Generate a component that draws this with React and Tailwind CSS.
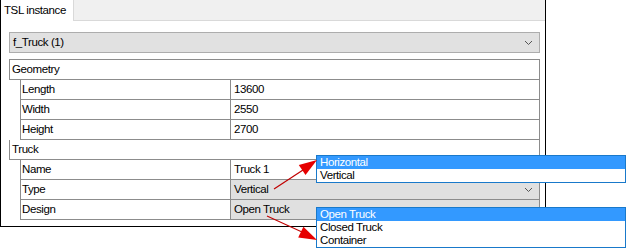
import React from "react";

const groups = [
  {
    name: "Geometry",
    items: [
      { label: "Length", value: "13600" },
      { label: "Width", value: "2550" },
      { label: "Height", value: "2700" },
    ],
  },
  {
    name: "Truck",
    items: [
      { label: "Name", value: "Truck 1" },
      { label: "Type", value: "Vertical", combo: true },
      { label: "Design", value: "Open Truck", combo: true },
    ],
  },
];

const Chevron = () => (
  <svg width="9" height="6" viewBox="0 0 9 6" className="shrink-0">
    <path d="M1 1 L4.5 4.5 L8 1" fill="none" stroke="#555" strokeWidth="1" />
  </svg>
);

const Popup = ({ items, className }) => (
  <div className={`absolute w-[310px] border border-[#1979ca] bg-white ${className}`}>
    {items.map((item, i) => (
      <div
        key={item}
        className={`h-[13px] pl-[3px] leading-[13px] ${i === 0 ? "bg-[#3399ff] text-white" : "text-black"}`}
      >
        {item}
      </div>
    ))}
  </div>
);

export default function App() {
  return (
    <div className="relative w-[627px] h-[248px] bg-white text-[11.5px] tracking-[-0.4px] text-black font-['Liberation_Sans',Arial,sans-serif]">
      <div className="flex flex-col w-[546px] h-[227px] border-l border-r border-b border-black">
        {/* tab strip */}
        <div className="flex h-[21px] bg-[#f0f0f0] border-b border-[#d9d9d9]">
          <div className="w-[73px] h-[21px] bg-white border-r border-[#d9d9d9] pl-[3px] leading-[20px]">
            TSL instance
          </div>
        </div>

        <div className="flex flex-col pl-[8px] pt-[11px]">
          {/* selector */}
          <div className="flex items-center justify-between w-[531px] h-[21px] bg-[#e1e1e1] border border-[#adadad] pl-[3px] pr-[6px]">
            <span>f_Truck (1)</span>
            <Chevron />
          </div>

          {/* property grid */}
          <div className="mt-[6px] w-[531px] border-t border-[#8c8c8c]">
            {groups.map((g) => (
              <div key={g.name} className="flex flex-col">
                <div className="h-[20px] border-l border-r border-b border-[#8c8c8c] pl-[2px] leading-[19px]">
                  {g.name}
                </div>
                {g.items.map((it) => (
                  <div
                    key={it.label}
                    className="flex ml-[11px] h-[20px] border-l border-r border-b border-[#8c8c8c]"
                  >
                    <div className="w-[209px] pl-[1px] leading-[19px]">{it.label}</div>
                    <div
                      className={`flex flex-1 items-center justify-between border-l border-[#8c8c8c] pl-[3px] pr-[6px] ${
                        it.combo ? "bg-[#e0e0e0]" : "bg-white"
                      }`}
                    >
                      <span>{it.value}</span>
                      {it.label === "Type" && <Chevron />}
                    </div>
                  </div>
                ))}
              </div>
            ))}
          </div>
        </div>
      </div>

      {/* annotation popups */}
      <Popup items={["Horizontal", "Vertical"]} className="left-[316px] top-[155px]" />
      <Popup items={["Open Truck", "Closed Truck", "Container"]} className="left-[316px] top-[207px]" />

      <svg className="absolute left-0 top-0" width="627" height="248" viewBox="0 0 627 248">
        <line x1="274" y1="189" x2="303" y2="170" stroke="#c00000" strokeWidth="1.2" />
        <polygon points="317,160 305.5,175.1 298.8,165.1" fill="#e60000" />
        <line x1="267" y1="216" x2="302" y2="232" stroke="#c00000" strokeWidth="1.2" />
        <polygon points="317,240 298.2,237.6 303.4,226.8" fill="#e60000" />
      </svg>
    </div>
  );
}
